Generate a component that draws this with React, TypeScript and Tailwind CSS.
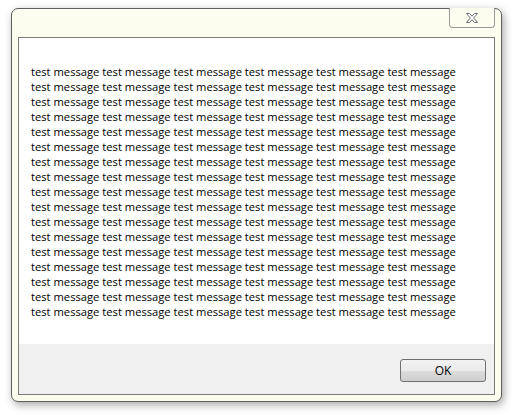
import React from 'react';

const message = Array(102).fill('test message').join(' ');

const CloseGlyph: React.FC = () => (
    <svg width="14" height="12" viewBox="0 0 14 12">
        <path
            d="M1.5 1.5 H4.5 L7 4.2 L9.5 1.5 H12.5 L8.6 6 L12.5 10.5 H9.5 L7 7.8 L4.5 10.5 H1.5 L5.4 6 Z"
            fill="#ffffff"
            stroke="#6f7378"
            strokeWidth="1"
            strokeLinejoin="round"
        />
    </svg>
);

export default function App() {
    return (
        <div className="min-h-screen bg-white pl-[11px] pt-[8px] font-['Open_Sans',sans-serif]">
            {/* Dialog frame */}
            <div className="flex h-[394px] w-[491px] flex-col rounded-[7px] border border-[#5f5f5f] bg-[#fcfcef] px-[6px] pb-[6px] shadow-[2px_3px_8px_rgba(0,0,0,0.35)]">
                <div className="flex h-[28px] justify-end">
                    <button className="-mt-px flex h-[20px] w-[46px] items-center justify-center rounded-b-[4px] border border-t-0 border-[#9a9a9a] bg-[#fcfcef]">
                        <CloseGlyph />
                    </button>
                </div>

                {/* Content box */}
                <div className="flex flex-1 flex-col border border-[#7b7b7b] bg-white">
                    <div className="flex-1 pl-[12px] pt-[26px]">
                        <p className="w-[434px] text-[11.2px] leading-[15px] text-black">{message}</p>
                    </div>
                    <div className="flex h-[50px] justify-end bg-[#f0f0f0] pr-[8px] pt-[15px]">
                        <button className="h-[23px] w-[86px] rounded-[3px] border border-[#707070] bg-[linear-gradient(#f2f2f2_0%,#ebebeb_50%,#dddddd_50%,#cfcfcf_100%)] text-[12px] text-black">
                            OK
                        </button>
                    </div>
                </div>
            </div>
        </div>
    );
}
